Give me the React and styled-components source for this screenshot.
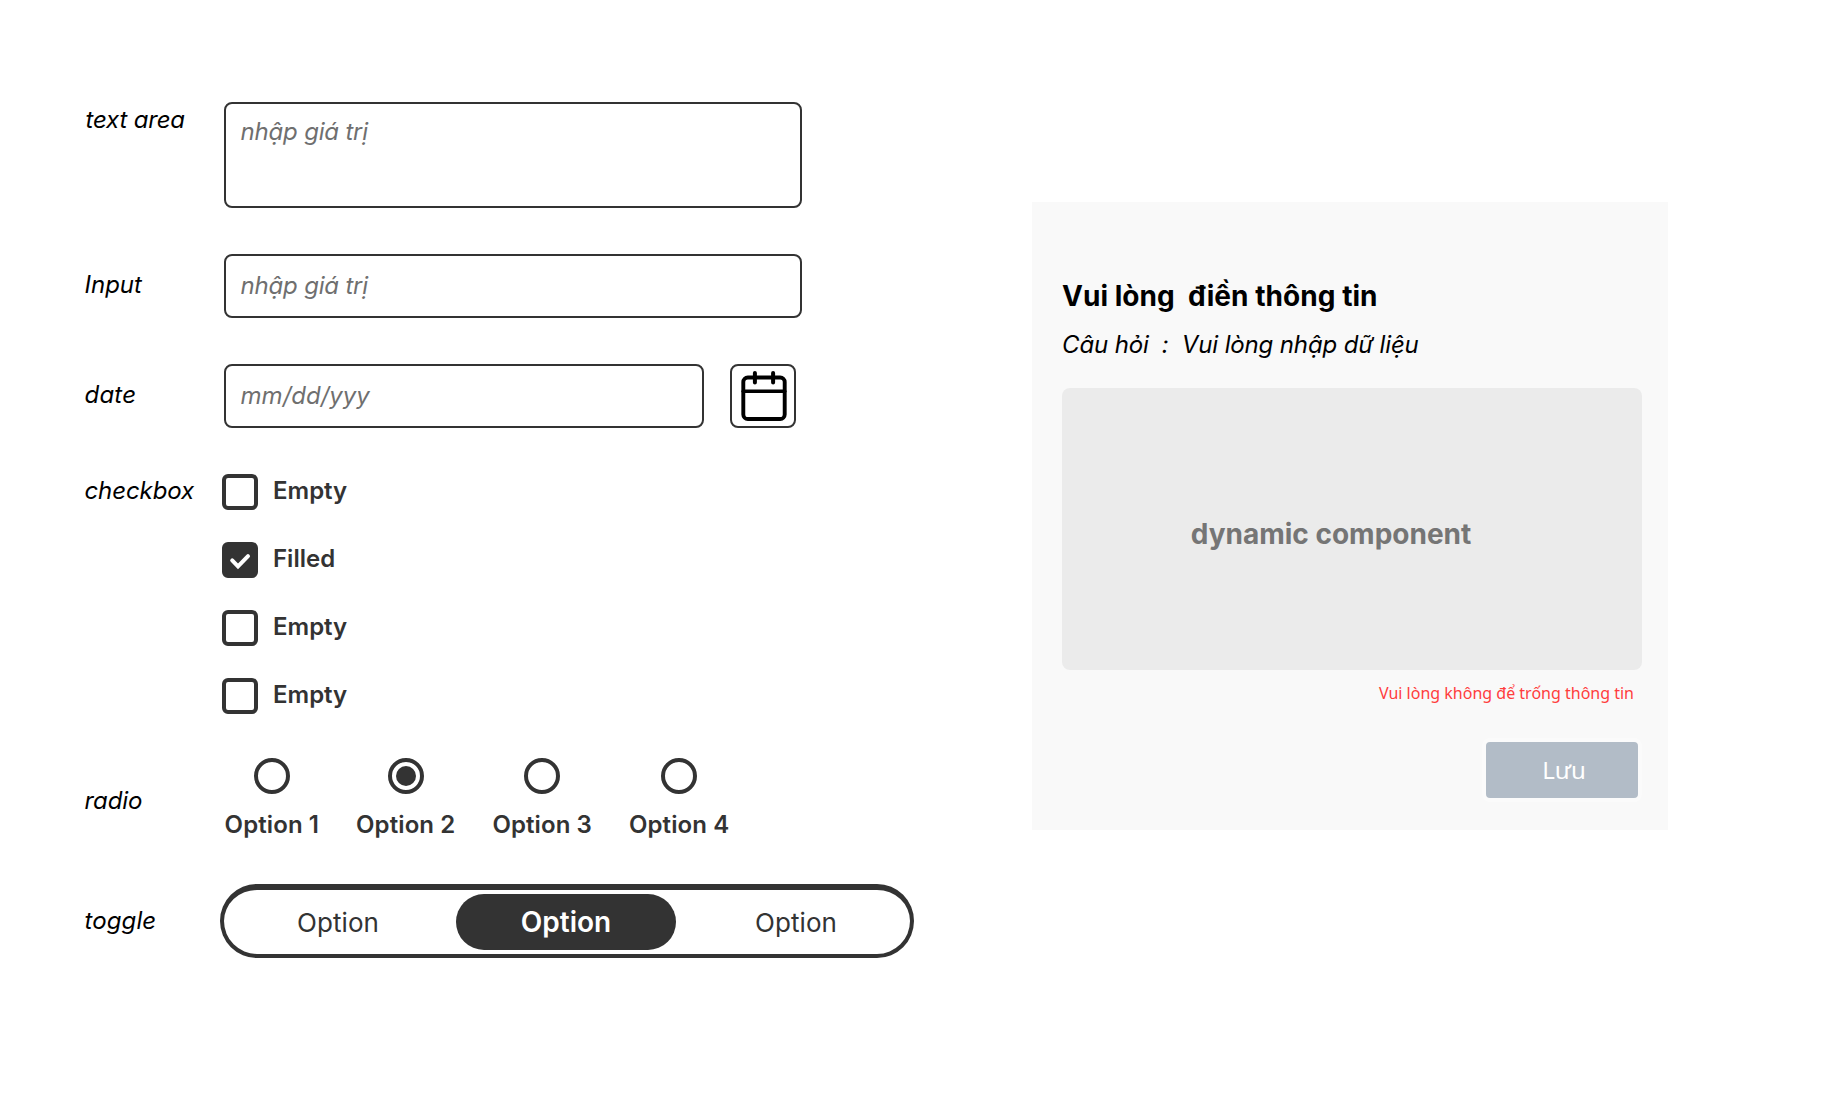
import React, { useState } from "react";
import styled, { createGlobalStyle, css } from "styled-components";

const INK = "#333333";

const GlobalStyle = createGlobalStyle`
  *, *::before, *::after { box-sizing: border-box; }
  body {
    margin: 0;
    background: #ffffff;
    color: #000000;
    font-family: Inter, "Noto Sans", sans-serif;
    font-size: 24px;
    line-height: 30px;
  }
  button, input, textarea { font: inherit; margin: 0; }
`;

const Page = styled.main`
  display: flex;
  align-items: flex-start;
  width: 1822px;
  height: 1094px;
  padding: 102px 0 0 84px;
  overflow: hidden;
`;

const Controls = styled.section`
  display: flex;
  flex-direction: column;
  gap: 46px;
  width: 830px;
`;

const Row = styled.div`
  display: grid;
  grid-template-columns: ${({ $labelWidth = 140 }) => $labelWidth}px auto;
  justify-content: start;
  align-items: ${({ $align = "center" }) => $align};
  margin-top: ${({ $shift = 0 }) => $shift}px;
`;

const RowLabel = styled.span`
  font-style: italic;
  white-space: nowrap;
  letter-spacing: ${({ $track = 0 }) => $track}px;
  padding-top: ${({ $top = 0 }) => $top}px;
  padding-bottom: ${({ $bottom = 2 }) => $bottom}px;
  padding-left: ${({ $left = 0.5 }) => $left}px;
`;

const fieldBox = css`
  display: block;
  border: 2px solid ${INK};
  border-radius: 8px;
  background: #ffffff;
`;

const fieldText = css`
  font-style: italic;
  color: ${INK};
  outline: none;
  letter-spacing: ${({ $track = -0.2 }) => $track}px;
  &::placeholder { color: #6f6f6f; opacity: 1; }
`;

const TextArea = styled.textarea`
  ${fieldBox}
  ${fieldText}
  width: 578px;
  height: 106px;
  padding: 13px 14.6px;
  resize: none;
  overflow: hidden;
`;

const TextInput = styled.input`
  ${fieldBox}
  ${fieldText}
  width: ${({ $width = 578 }) => $width}px;
  height: 64px;
  padding: 0 14.6px 2px;
`;

const DateGroup = styled.div`
  display: flex;
  gap: 26px;
`;

const CalendarButton = styled.button`
  ${fieldBox}
  width: 66px;
  height: 64px;
  padding: 0;
  color: #000000;
`;

const CheckList = styled.div`
  display: flex;
  flex-direction: column;
  gap: 32px;
`;

const CheckItem = styled.button`
  display: flex;
  align-items: center;
  gap: 15px;
  height: 36px;
  padding: 0;
  border: 0;
  background: none;
  color: ${INK};
  font-weight: 600;
`;

const CheckMark = styled.span`
  display: grid;
  place-items: center;
  width: 36px;
  height: 36px;
  border: 4px solid ${INK};
  border-radius: 6px;
  background: ${({ $checked }) => ($checked ? INK : "#ffffff")};
`;

const ItemText = styled.span`
  padding-bottom: 2px;
`;

const RadioGroup = styled.div`
  display: flex;
  gap: 37px;
  padding-left: 0.6px;
`;

const RadioItem = styled.button`
  display: flex;
  flex-direction: column;
  align-items: center;
  gap: 16px;
  padding: 0;
  border: 0;
  background: none;
  color: ${INK};
  font-weight: 600;
  letter-spacing: 0.1px;
  white-space: nowrap;
`;

const RadioRing = styled.span`
  display: grid;
  place-items: center;
  width: 36px;
  height: 36px;
  border: 4px solid ${INK};
  border-radius: 50%;
`;

const RadioDot = styled.span`
  width: 20px;
  height: 20px;
  border-radius: 50%;
  background: ${INK};
`;

const Toggle = styled.div`
  display: grid;
  grid-template-columns: 232px 220px 234px;
  align-items: center;
  width: 694px;
  height: 74px;
  border: 4px solid ${INK};
  border-top-width: 6px;
  border-radius: 37px;
`;

const ToggleOption = styled.button`
  height: 56px;
  padding: ${({ $pad = "0" }) => $pad};
  border: 0;
  border-radius: 28px;
  background: ${({ $active }) => ($active ? INK : "transparent")};
  color: ${({ $active }) => ($active ? "#ffffff" : INK)};
  font-size: ${({ $active }) => ($active ? 28 : 26)}px;
  font-weight: ${({ $active }) => ($active ? 600 : 400)};
  letter-spacing: ${({ $active }) => ($active ? 0 : 0.1)}px;
`;

const Panel = styled.section`
  display: flex;
  flex-direction: column;
  width: 636px;
  height: 628px;
  margin: 100px 0 0 118px;
  padding: 76px 26px 28px 30px;
  background: #f9f9f9;
`;

const PanelTitle = styled.h1`
  margin: 0;
  font-size: 28px;
  line-height: 36px;
  font-weight: 700;
  letter-spacing: 0.04px;
  white-space: pre;
`;

const Question = styled.p`
  margin: 16px 0 28px;
  font-style: italic;
  letter-spacing: -0.14px;
  white-space: pre;
`;

const Slot = styled.div`
  display: grid;
  place-items: center;
  height: 282px;
  padding: 10px 42px 0 0;
  border-radius: 8px;
  background: #ebebeb;
  color: #757575;
  font-size: 28px;
  font-weight: 700;
`;

const ErrorText = styled.p`
  align-self: flex-end;
  margin: 11px 8px 0 0;
  font-family: "Noto Sans", sans-serif;
  font-size: 16px;
  line-height: 24px;
  color: #ff3d3d;
`;

const SaveButton = styled.button`
  align-self: flex-end;
  width: 160px;
  height: 64px;
  margin-top: 33px;
  padding: 0 0 0 4px;
  border: 4px solid #fbfbfb;
  border-radius: 8px;
  background: #b2bcc7;
  color: #ffffff;
  font-family: "Noto Sans", sans-serif;
`;

function CalendarIcon() {
  return (
    <svg width="62" height="60" viewBox="0 0 62 60" fill="none" stroke="currentColor" strokeWidth="4" strokeLinecap="round">
      <rect x="11.3" y="11.5" width="41.4" height="41.5" rx="4.5" strokeWidth="3.9" />
      <path d="M11.3 25.3h41.4" strokeWidth="3.6" />
      <path d="M22.9 7v9.6M41.1 7v9.6" />
    </svg>
  );
}

function Tick() {
  return (
    <svg width="28" height="28" viewBox="0 0 28 28" fill="none" stroke="#ffffff" strokeWidth="4" strokeLinecap="round">
      <path d="M6.2 14.4l5.8 6L22 10.2" />
    </svg>
  );
}

export default function App() {
  const [checks, setChecks] = useState([false, true, false, false]);
  const [radio, setRadio] = useState(2);
  const [active, setActive] = useState(1);
  const togglePads = ["1px 4px 0 0", "0", "1px 0 0 6px"];

  return (
    <>
      <GlobalStyle />
      <Page>
        <Controls>
          <Row $align="start">
            <RowLabel $top={3} $left={1.6} $track={-0.2}>text area</RowLabel>
            <TextArea placeholder="nhập giá trị" />
          </Row>
          <Row>
            <RowLabel>Input</RowLabel>
            <TextInput placeholder="nhập giá trị" />
          </Row>
          <Row>
            <RowLabel $track={0.2}>date</RowLabel>
            <DateGroup>
              <TextInput $width={480} $track={0} placeholder="mm/dd/yyy" />
              <CalendarButton aria-label="calendar"><CalendarIcon /></CalendarButton>
            </DateGroup>
          </Row>
          <Row $align="start" $labelWidth={138}>
            <RowLabel $top={2} $track={-0.1}>checkbox</RowLabel>
            <CheckList>
              {checks.map((on, i) => (
                <CheckItem key={i} onClick={() => setChecks(checks.map((c, j) => (j === i ? !c : c)))}>
                  <CheckMark $checked={on}>{on && <Tick />}</CheckMark>
                  <ItemText>{on ? "Filled" : "Empty"}</ItemText>
                </CheckItem>
              ))}
            </CheckList>
          </Row>
          <Row $shift={-2}>
            <RowLabel $top={6} $track={-0.1}>radio</RowLabel>
            <RadioGroup>
              {[1, 2, 3, 4].map((n) => (
                <RadioItem key={n} onClick={() => setRadio(n)}>
                  <RadioRing>{radio === n && <RadioDot />}</RadioRing>
                  <span>Option {n}</span>
                </RadioItem>
              ))}
            </RadioGroup>
          </Row>
          <Row $shift={-2} $labelWidth={136}>
            <RowLabel $track={0.1} $bottom={0}>toggle</RowLabel>
            <Toggle>
              {togglePads.map((pad, i) => (
                <ToggleOption key={i} $active={active === i} $pad={pad} onClick={() => setActive(i)}>
                  Option
                </ToggleOption>
              ))}
            </Toggle>
          </Row>
        </Controls>
        <Panel>
          <PanelTitle>{"Vui lòng  điền thông tin"}</PanelTitle>
          <Question>{"Câu hỏi  :  Vui lòng nhập dữ liệu"}</Question>
          <Slot>dynamic component</Slot>
          <ErrorText>Vui lòng không để trống thông tin</ErrorText>
          <SaveButton>Lưu</SaveButton>
        </Panel>
      </Page>
    </>
  );
}
